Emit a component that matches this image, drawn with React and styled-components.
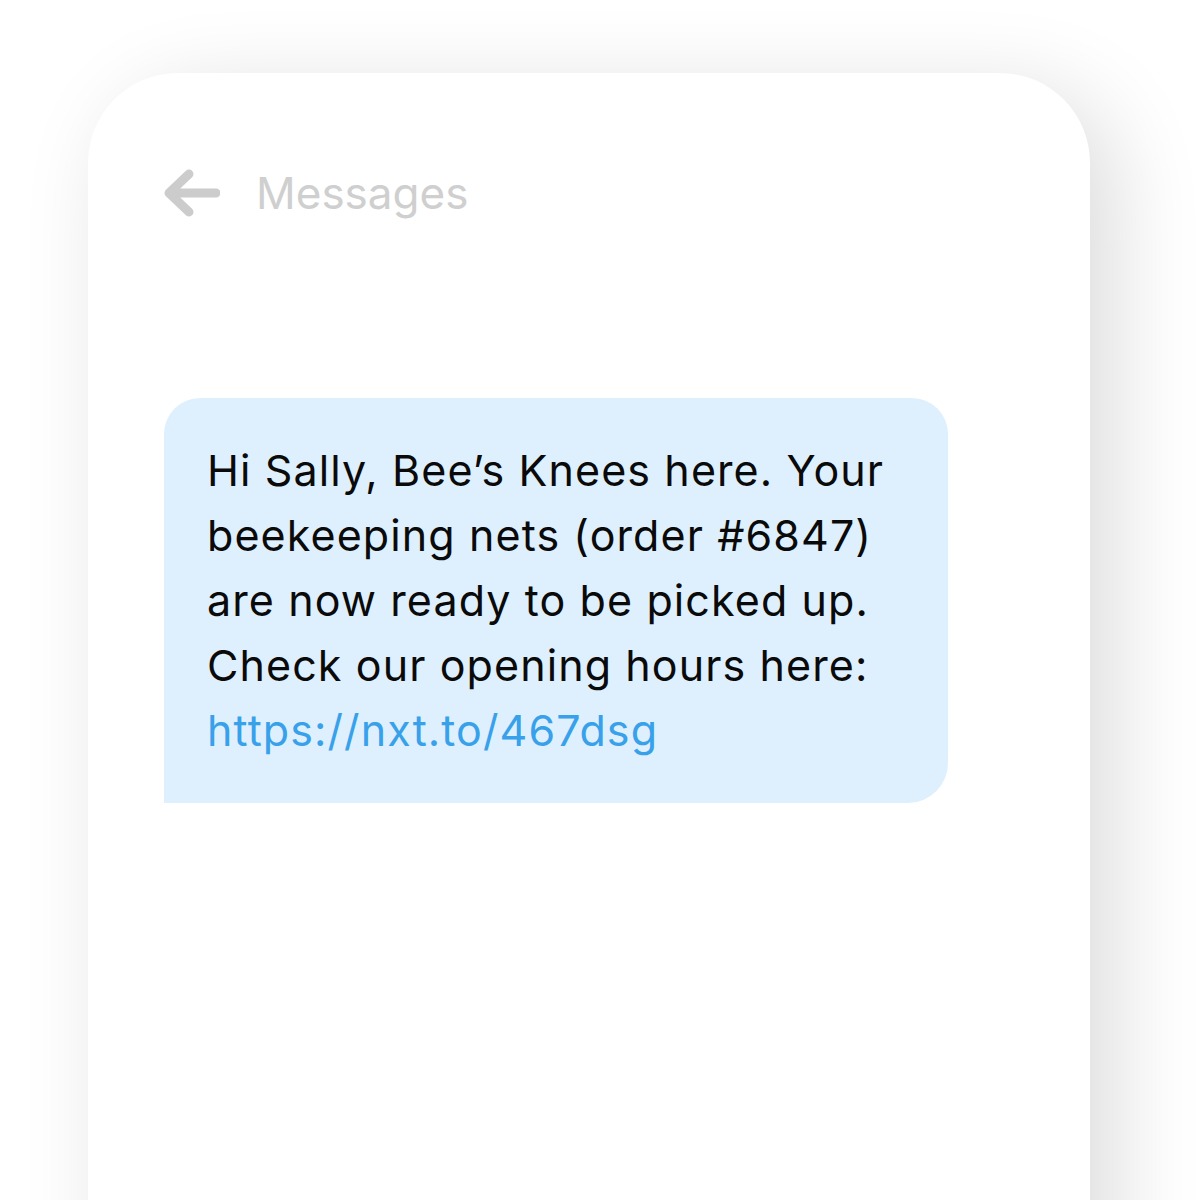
import React from "react"
import styled, { createGlobalStyle } from "styled-components"

const GlobalStyle = createGlobalStyle`
	html, body {
		margin: 0;
		padding: 0;
		background: #ffffff;
		overflow: hidden;
	}
	body {
		font-family: "Inter", "Liberation Sans", sans-serif;
	}
`

const Page = styled.div`
	width: 1200px;
	height: 1200px;
	overflow: hidden;
	padding: 73px 0 0 88px;
	box-sizing: border-box;
`

const Phone = styled.div`
	width: 1002px;
	height: 1300px;
	background: #ffffff;
	border-radius: 90px 90px 0 0;
	box-shadow: 24px 20px 90px rgba(0, 0, 0, 0.14);
	padding: 95px 0 0 76px;
	box-sizing: border-box;
`

const Header = styled.div`
	display: flex;
	align-items: center;
	gap: 36px;
	height: 50px;
`

const BackArrow = styled.svg`
	width: 56px;
	height: 50px;
	flex: none;
`

const Title = styled.h1`
	margin: 0;
	font-size: 44px;
	font-weight: 400;
	color: #cfcfcf;
	line-height: 50px;
`

const Bubble = styled.div`
	margin-top: 180px;
	width: 784px;
	box-sizing: border-box;
	padding: 40px 0 40px 43px;
	background: #def0fe;
	border-radius: 36px 36px 40px 0;
	font-size: 43px;
	letter-spacing: 1.1px;
	line-height: 65px;
	color: #0a0a0a;
	white-space: nowrap;
`

const Link = styled.a`
	color: #38a1ea;
	text-decoration: none;
`

const App = () => {
	return (
		<Page>
			<GlobalStyle />
			<Phone>
				<Header>
					<BackArrow viewBox="0 0 56 50" fill="none">
						<path
							d="M52 25H6M25 6L5 25L25 44"
							stroke="#cccccc"
							strokeWidth="9"
							strokeLinecap="round"
							strokeLinejoin="round"
						/>
					</BackArrow>
					<Title>Messages</Title>
				</Header>
				<Bubble>
					Hi Sally, Bee’s Knees here. Your
					<br />
					beekeeping nets (order #6847)
					<br />
					are now ready to be picked up.
					<br />
					Check our opening hours here:
					<br />
					<Link href="#">https://nxt.to/467dsg</Link>
				</Bubble>
			</Phone>
		</Page>
	)
}

export default App
